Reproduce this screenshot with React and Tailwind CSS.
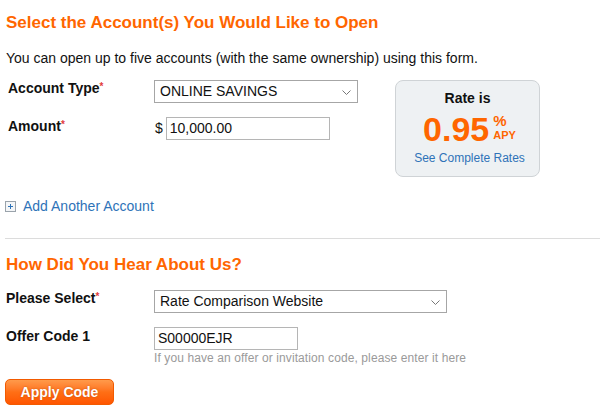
import React from "react";

function Chevron() {
  return (
    <svg width="9" height="6" viewBox="0 0 9 6" className="absolute right-[6px] top-[9px]">
      <path d="M0.5 0.5 L4.5 4.5 L8.5 0.5" fill="none" stroke="#777" strokeWidth="1" />
    </svg>
  );
}

function Star() {
  return <span className="text-[#e23b3b] text-[10px] align-top relative top-[-1px]">*</span>;
}

export default function App() {
  return (
    <div className="w-[600px] h-[420px] bg-white overflow-hidden text-[#111] font-['Liberation_Sans',Arial,sans-serif]">
      <h1 className="mt-[12px] ml-[6px] text-[17px] leading-[21px] font-bold text-[#ff6600]">
        Select the Account(s) You Would Like to Open
      </h1>
      <p className="mt-[17px] ml-[6px] text-[14px] leading-[16px]">
        You can open up to five accounts (with the same ownership) using this form.
      </p>

      <div className="mt-[14px] flex pl-[8px]">
        <div className="w-[387px] flex flex-col">
          <div className="flex items-start">
            <div className="w-[146px] text-[14px] leading-[16px] font-bold">
              Account Type<Star />
            </div>
            <div className="relative w-[204px] h-[23px] border border-[#a6a6a6] bg-white text-[14px] leading-[21px] pl-[5px]">
              ONLINE SAVINGS
              <Chevron />
            </div>
          </div>
          <div className="flex items-start mt-[14px]">
            <div className="w-[146px] text-[14px] leading-[16px] font-bold mt-[1px]">
              Amount<Star />
            </div>
            <div className="flex items-center h-[23px]">
              <span className="text-[14px] ml-[1px]">$</span>
              <div className="ml-[3px] w-[164px] h-[23px] border border-[#b5b5b5] text-[14px] leading-[21px] pl-[3px]">
                10,000.00
              </div>
            </div>
          </div>
        </div>
        <div className="w-[145px] h-[97px] rounded-[8px] border border-[#cfd3d6] bg-[#eef1f3] flex flex-col items-center">
          <div className="mt-[9px] text-[14px] leading-[16px] font-bold">Rate is</div>
          <div className="mt-[6px] flex items-start ml-[4px]">
            <span className="text-[34px] leading-[34px] font-bold text-[#ff6600]">0.95</span>
            <div className="ml-[4px] flex flex-col items-start text-[#ff6600]">
              <span className="text-[15px] leading-[15px] font-bold mt-[1px] h-[15px]">%</span>
              <span className="text-[11px] leading-[11px] font-bold mt-[2px] h-[11px]">APY</span>
            </div>
          </div>
          <div className="mt-[5px] text-[12px] leading-[14px] text-[#2e73b8] ml-[4px]">See Complete Rates</div>
        </div>
      </div>

      <div className="mt-[21px] ml-[5px] flex items-center h-[16px]">
        <div className="w-[11px] h-[11px] border border-[#9aa3ab] bg-[#f4f6f8] relative">
          <div className="absolute left-[2px] top-[4px] w-[5px] h-px bg-[#2e73b8]" />
          <div className="absolute left-[4px] top-[2px] w-px h-[5px] bg-[#2e73b8]" />
        </div>
        <span className="ml-[7px] text-[14px] leading-[16px] text-[#2e73b8]">Add Another Account</span>
      </div>

      <div className="mt-[24px] ml-[5px] h-px bg-[#dcdcdc]" />

      <h2 className="mt-[15px] ml-[6px] text-[17px] leading-[21px] font-bold text-[#ff6600]">
        How Did You Hear About Us?
      </h2>

      <div className="mt-[15px] ml-[6px] flex items-start">
        <div className="w-[148px] text-[14px] leading-[16px] font-bold">
          Please Select<Star />
        </div>
        <div className="relative w-[293px] h-[23px] border border-[#a6a6a6] bg-white text-[14px] leading-[21px] pl-[5px]">
          Rate Comparison Website
          <Chevron />
        </div>
      </div>

      <div className="mt-[14px] ml-[6px] flex items-start">
        <div className="w-[148px] text-[14px] leading-[16px] font-bold mt-[1px]">Offer Code 1</div>
        <div className="flex flex-col">
          <div className="w-[144px] h-[23px] border border-[#b5b5b5] text-[14px] leading-[21px] pl-[3px]">
            S00000EJR
          </div>
          <div className="mt-[1px] text-[12px] leading-[14px] text-[#9a9a9a] tracking-[0.1px]">
            If you have an offer or invitation code, please enter it here
          </div>
        </div>
      </div>

      <button className="mt-[14px] ml-[5px] w-[109px] h-[26px] rounded-[5px] border border-[#f25a00] bg-gradient-to-b from-[#ff9a4a] via-[#ff6f15] to-[#ff5500] text-white text-[14px] font-bold [text-shadow:0_0_2px_rgba(160,60,0,0.6)] flex items-center justify-center">
        Apply Code
      </button>
    </div>
  );
}
